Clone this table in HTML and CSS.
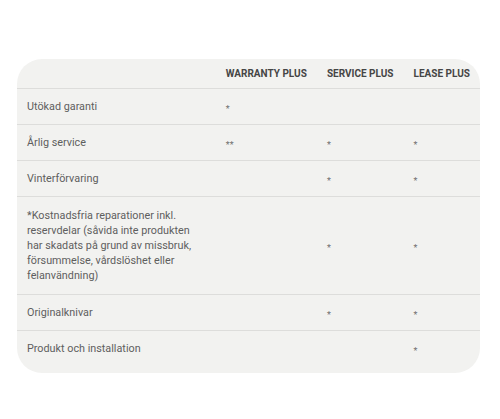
FILE: index.html
```html
<!DOCTYPE html>
<html lang="sv">
<head>
<meta charset="utf-8">
<link rel="stylesheet" href="styles.css">
</head>
<body>
<div class="card">
  <table class="plans">
    <thead>
      <tr>
        <th class="label"></th>
        <th>WARRANTY PLUS</th>
        <th>SERVICE PLUS</th>
        <th>LEASE PLUS</th>
      </tr>
    </thead>
    <tbody>
      <tr><td class="label">Utökad garanti</td><td><span class="star">*</span></td><td></td><td></td></tr>
      <tr><td class="label">Årlig service</td><td><span class="star">**</span></td><td><span class="star">*</span></td><td><span class="star">*</span></td></tr>
      <tr><td class="label">Vinterförvaring</td><td></td><td><span class="star">*</span></td><td><span class="star">*</span></td></tr>
      <tr class="tall"><td class="label">*Kostnadsfria reparationer inkl. reservdelar (såvida inte produkten har skadats på grund av missbruk, försummelse, vårdslöshet eller felanvändning)</td><td></td><td><span class="star">*</span></td><td><span class="star">*</span></td></tr>
      <tr><td class="label">Originalknivar</td><td></td><td><span class="star">*</span></td><td><span class="star">*</span></td></tr>
      <tr class="last"><td class="label">Produkt och installation</td><td></td><td></td><td><span class="star">*</span></td></tr>
    </tbody>
  </table>
</div>
</body>
</html>
```
FILE: styles.css
```css
html, body {
  margin: 0;
  padding: 0;
  background: #ffffff;
}
body {
  font-family: Roboto, "Liberation Sans", sans-serif;
  font-size: 10.8px;
  color: #5e5e5e;
}
.card {
  margin: 59px 0 0 17px;
  width: 463px;
  background: #f2f2f0;
  border-radius: 25px;
  padding-bottom: 7px;
  overflow: hidden;
}
.plans {
  width: 100%;
  border-collapse: collapse;
}
.plans th {
  font-family: Roboto, "Liberation Sans", sans-serif;
  font-weight: 700;
  font-size: 10px;
  color: #454545;
  text-align: left;
  white-space: nowrap;
  line-height: 15px;
  padding: 7px 10px;
  border-bottom: 1px solid #dddddb;
}
.plans td {
  line-height: 15px;
  padding: 10px 10px;
  vertical-align: middle;
  border-bottom: 1px solid #dddddb;
}
.plans .tall td {
  padding-top: 11px;
  padding-bottom: 11px;
}
.plans .last td {
  border-bottom: none;
}
.plans td.label {
  padding-left: 10px;
  padding-right: 12px;
}
.star {
  font-size: 9px;
  line-height: 1;
  vertical-align: -2px;
  color: #707070;
}
```
